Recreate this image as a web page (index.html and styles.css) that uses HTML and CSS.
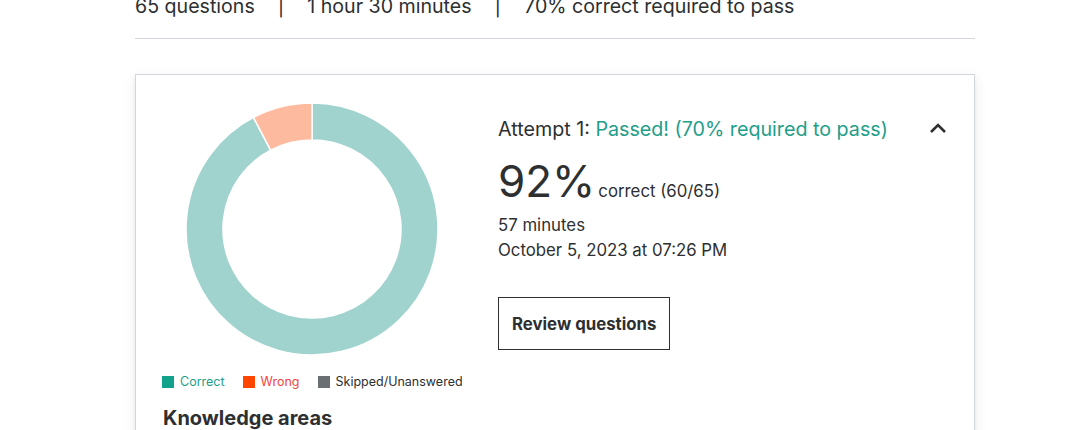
FILE: index.html
```html
<!DOCTYPE html>
<html lang="en">
<head>
<meta charset="utf-8">
<title>Practice test results</title>
<link rel="stylesheet" href="styles.css">
</head>
<body>
<div class="page">
  <div class="meta">
    <span>65 questions</span>
    <span class="sep">|</span>
    <span>1 hour 30 minutes</span>
    <span class="sep">|</span>
    <span>70% correct required to pass</span>
  </div>

  <section class="card">
    <div class="chart-col">
      <svg class="donut" width="252" height="252" viewBox="0 0 252 252">
        <path class="seg-correct" d="M126 0 A126 126 0 1 1 67.45 14.43 L84.64 47.19 A89 89 0 1 0 126 37 Z"/>
        <path class="seg-wrong" d="M126 0 L126 37 A89 89 0 0 0 84.64 47.19 L67.45 14.43 A126 126 0 0 1 126 0 Z"/>
      </svg>
      <ul class="legend">
        <li class="legend-item correct"><span class="swatch"></span>Correct</li>
        <li class="legend-item wrong"><span class="swatch"></span>Wrong</li>
        <li class="legend-item skipped"><span class="swatch"></span>Skipped/Unanswered</li>
      </ul>
      <h3 class="areas-title">Knowledge areas</h3>
    </div>

    <div class="info-col">
      <div class="attempt-head">
        <div class="attempt-title">Attempt 1: <span class="passed">Passed! (70% required to pass)</span></div>
        <svg class="chevron" width="18" height="12" viewBox="0 0 18 12">
          <path d="M2 10 L9 3 L16 10" fill="none" stroke="#2d2f31" stroke-width="2.6"/>
        </svg>
      </div>
      <div class="score"><span class="pct">92%</span><span class="pct-label">correct (60/65)</span></div>
      <div class="details">
        <div class="detail">57 minutes</div>
        <div class="detail">October 5, 2023 at 07:26 PM</div>
      </div>
      <button class="review-btn" type="button">Review questions</button>
    </div>
  </section>
</div>
</body>
</html>
```

FILE: styles.css
```css
html, body {
  margin: 0;
  padding: 0;
  background: #fff;
  overflow: hidden;
}
body {
  font-family: Inter, "Liberation Sans", Arial, sans-serif;
  color: #2d2f31;
}
.page {
  width: 840px;
  margin-left: 135px;
}
.meta {
  margin-top: -7px;
  font-size: 19.6px;
  line-height: 27px;
  padding-bottom: 18px;
  border-bottom: 1px solid #d1d7dc;
  display: flex;
  gap: 23px;
}
.card {
  margin-top: 35px;
  border: 1px solid #d1d7dc;
  box-shadow: 0 2px 4px rgba(0,0,0,0.06), 0 4px 14px rgba(0,0,0,0.07);
  display: flex;
  padding: 28px 28px 0 26px;
  height: 400px;
}
.chart-col {
  width: 300px;
  display: flex;
  flex-direction: column;
  align-items: center;
}
.donut { display: block; }
.seg-correct { fill: #a1d3ce; stroke: #fff; stroke-width: 1.5; }
.seg-wrong { fill: #feba9e; stroke: #fff; stroke-width: 1.5; }
.legend {
  list-style: none;
  margin: 20px 0 0;
  padding: 0;
  display: flex;
  gap: 18px;
  font-size: 12.5px;
  line-height: 14px;
  align-self: stretch;
}
.legend-item {
  display: flex;
  align-items: center;
  gap: 6px;
}
.swatch {
  width: 12px;
  height: 12px;
  display: inline-block;
}
.correct { color: #1e9e8a; }
.correct .swatch { background: #12a28c; }
.wrong { color: #f4443c; }
.wrong .swatch { background: #ff4500; }
.skipped { color: #2d2f31; }
.skipped .swatch { background: #6a6f73; }
.areas-title {
  align-self: stretch;
  margin: 17px 0 0 1px;
  font-size: 20px;
  font-weight: 700;
  line-height: 24px;
}
.info-col {
  flex: 1;
  margin-left: 36px;
  padding-top: 12px;
}
.attempt-head {
  display: flex;
  justify-content: space-between;
  align-items: center;
}
.attempt-title {
  font-size: 19.7px;
  line-height: 28px;
}
.passed { color: #1e9e8a; }
.chevron { display: block; margin-right: -1px; margin-top: -3px; }
.score {
  margin-top: 14px;
  display: flex;
  align-items: baseline;
  gap: 3px;
}
.pct {
  font-size: 44px;
  line-height: 48px;
}
.pct-label {
  font-size: 16.8px;
}
.details {
  margin-top: 8px;
}
.detail {
  font-size: 16.8px;
  line-height: 25px;
}
.review-btn {
  margin-top: 34px;
  height: 53px;
  padding: 0 13px;
  background: #fff;
  border: 1px solid #2d2f31;
  font-family: inherit;
  font-size: 16.8px;
  font-weight: 700;
  color: #2d2f31;
  cursor: pointer;
}
```
